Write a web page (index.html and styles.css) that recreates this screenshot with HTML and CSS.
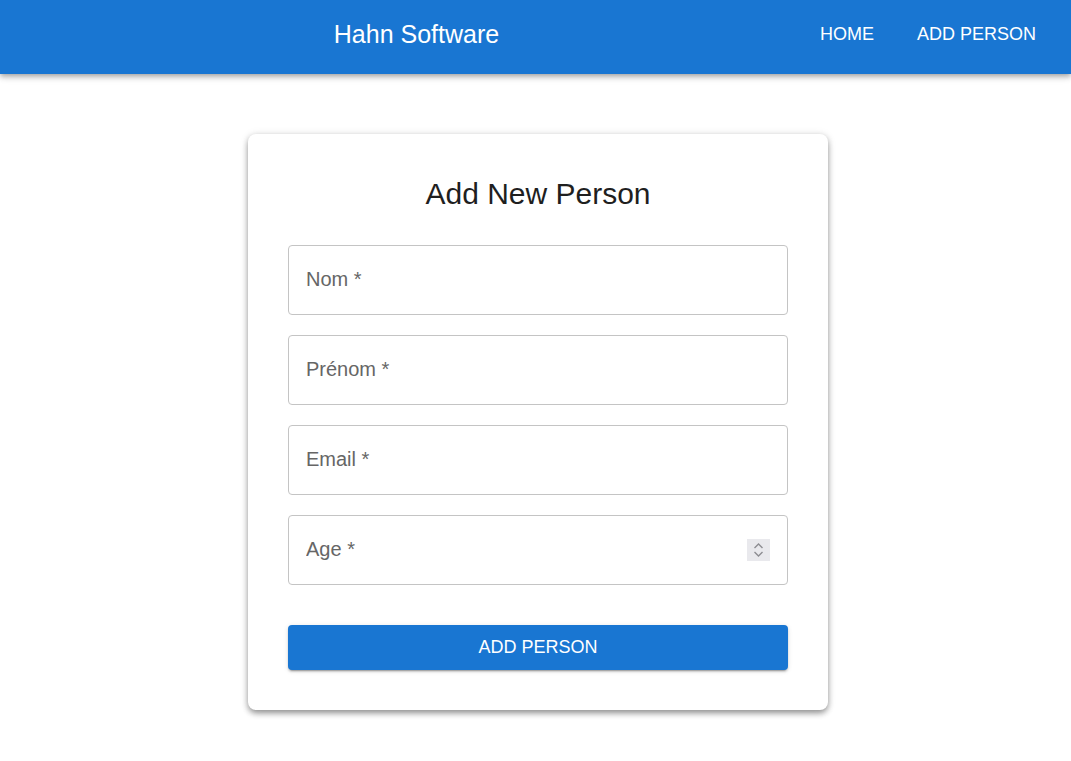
FILE: index.html
```html
<!DOCTYPE html>
<html lang="en">
<head>
<meta charset="utf-8">
<title>Hahn Software</title>
<link rel="stylesheet" href="styles.css">
</head>
<body>
<header class="appbar">
  <div class="brand">Hahn Software</div>
  <nav class="nav">
    <a class="nav-link" href="#">Home</a>
    <a class="nav-link" href="#">Add Person</a>
  </nav>
</header>
<main class="main">
  <form class="card">
    <h1 class="card-title">Add New Person</h1>
    <div class="field"><input class="input" type="text" placeholder="Nom *"></div>
    <div class="field"><input class="input" type="text" placeholder="Prénom *"></div>
    <div class="field"><input class="input" type="text" placeholder="Email *"></div>
    <div class="field">
      <input class="input" type="text" placeholder="Age *">
      <span class="spinner">
        <svg width="23" height="22" viewBox="0 0 23 22">
          <path d="M7.5 9 L11.5 5 L15.5 9" fill="none" stroke="#8d8d92" stroke-width="1.4"/>
          <path d="M7.5 13 L11.5 17 L15.5 13" fill="none" stroke="#8d8d92" stroke-width="1.4"/>
        </svg>
      </span>
    </div>
    <button class="submit" type="button">Add Person</button>
  </form>
</main>
</body>
</html>
```
FILE: styles.css
```css
* { box-sizing: border-box; }
html, body { margin: 0; padding: 0; background: #fff; }
body { font-family: "Liberation Sans", Arial, sans-serif; color: #1f1f1f; }

.appbar {
  height: 74px;
  background: #1976d2;
  display: flex;
  align-items: center;
  padding: 0 24px 0 24px;
  box-shadow: 0 2px 4px -1px rgba(0,0,0,0.2), 0 4px 5px 0 rgba(0,0,0,0.14), 0 1px 10px 0 rgba(0,0,0,0.12);
}
.brand {
  flex: 1;
  text-align: center;
  color: #fff;
  font-size: 25px;
  padding-left: 0;
  padding-bottom: 5px;
}
.nav { display: flex; gap: 21px; padding-bottom: 5px; }
.nav-link {
  color: #fff;
  text-decoration: none;
  text-transform: uppercase;
  font-size: 18px;
  padding: 6px 11px;
}

.main {
  display: flex;
  justify-content: center;
  padding-top: 60px;
  padding-left: 5px;
  padding-bottom: 40px;
}
.card {
  width: 580px;
  background: #fff;
  border-radius: 8px;
  padding: 40px;
  box-shadow: 0 4px 6px -1px rgba(0,0,0,0.3), 0 2px 6px 0 rgba(0,0,0,0.16), 0 1px 10px 0 rgba(0,0,0,0.10);
  display: flex;
  flex-direction: column;
}
.card-title {
  margin: 0 0 31px;
  font-weight: 400;
  font-size: 30px;
  line-height: 40px;
  text-align: center;
  color: #1f1f1f;
}
.field {
  position: relative;
  margin-bottom: 20px;
}
.input {
  display: block;
  width: 100%;
  height: 70px;
  border: 1px solid #c4c4c4;
  border-radius: 4px;
  padding: 0 17px 2px;
  font-family: "Liberation Sans", Arial, sans-serif;
  font-size: 20px;
  color: #333;
  outline: none;
  background: #fff;
}
.input::placeholder { color: #666; opacity: 1; }
.spinner {
  position: absolute;
  left: 459px;
  top: 24px;
  width: 23px;
  height: 22px;
  background: #e9e9ed;
  display: block;
}
.spinner svg { display: block; }
.submit {
  margin-top: 20px;
  height: 45px;
  border: none;
  border-radius: 4px;
  background: #1976d2;
  color: #fff;
  font-family: "Liberation Sans", Arial, sans-serif;
  font-size: 18px;
  text-transform: uppercase;
  box-shadow: 0 3px 1px -2px rgba(0,0,0,0.2), 0 2px 2px 0 rgba(0,0,0,0.14), 0 1px 5px 0 rgba(0,0,0,0.12);
  cursor: pointer;
}
```
